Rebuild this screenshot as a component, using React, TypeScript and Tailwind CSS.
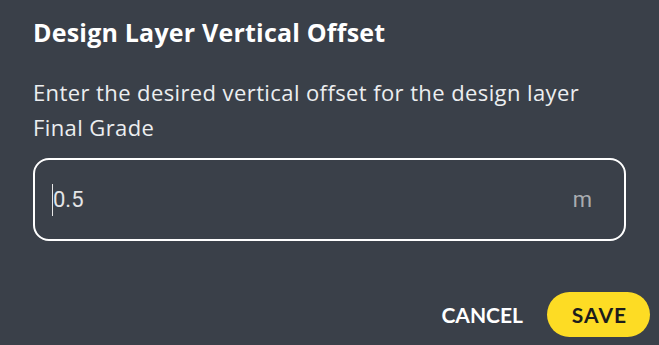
export default function App() {
  return (
    <div className="w-[659px] h-[345px] bg-[#3a4049] flex flex-col overflow-hidden" style={{ fontFamily: "'Open Sans', 'Noto Sans', sans-serif" }}>
      <div className="px-[33px] pt-[16px]">
        <h1 className="text-[25px] leading-[32px] font-bold text-white tracking-[0.2px]">Design Layer Vertical Offset</h1>
        <p className="mt-[27px] text-[22px] leading-[35px] text-[#eceef0] tracking-[0.4px]">
          Enter the desired vertical offset for the design layer
          <br />
          Final Grade
        </p>
        <div className="mt-[13px] h-[83px] border-[2.5px] border-white rounded-[16px] flex items-center pl-[17px] pr-[32px]" style={{ fontFamily: "Roboto, sans-serif" }}>
          <span className="w-[1px] h-[32px] bg-[#e6e6e6]" />
          <span className="text-[22px] leading-[32px] text-[#e4e5e7]">0.5</span>
          <span className="ml-auto text-[22px] leading-[32px] text-[#a9acb0]">m</span>
        </div>
      </div>
      <div className="mt-[51px] flex justify-end items-center pr-[9px] gap-[24px]" style={{ fontFamily: "Lato, sans-serif" }}>
        <button className="text-[21px] font-bold text-white">CANCEL</button>
        <button className="h-[45px] w-[103px] rounded-full bg-[#fddc24] text-[21px] font-bold text-[#1c1c1c] tracking-[1px] flex items-center justify-center pl-[2px]">SAVE</button>
      </div>
    </div>
  );
}
